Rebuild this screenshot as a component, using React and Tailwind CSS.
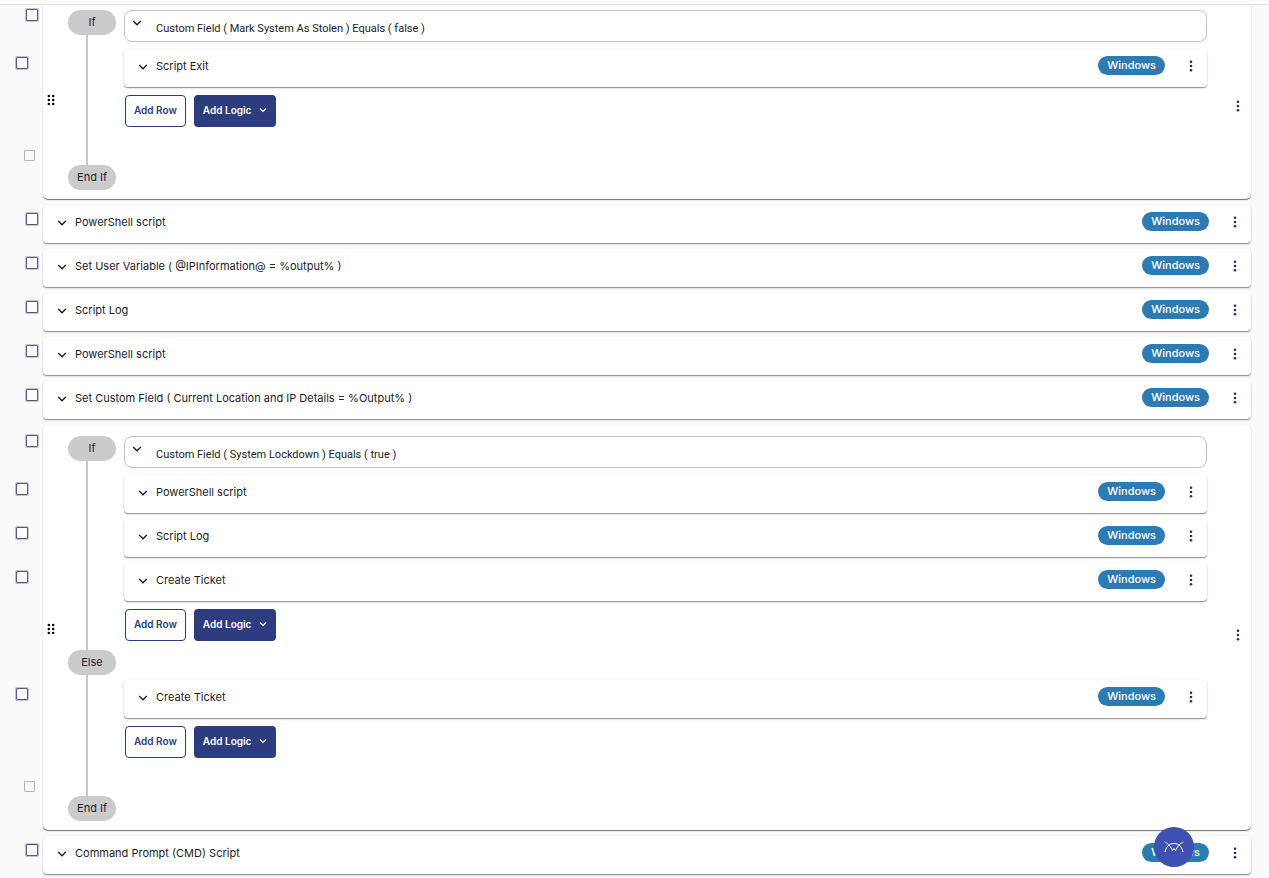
const steps = [
  {
    id: "s1",
    type: "if",
    condition: "Custom Field ( Mark System As Stolen ) Equals ( false )",
    then: ["Script Exit"]
  },
  { id: "s2", type: "row", title: "PowerShell script" },
  { id: "s3", type: "row", title: "Set User Variable ( @IPInformation@ = %output% )" },
  { id: "s4", type: "row", title: "Script Log" },
  { id: "s5", type: "row", title: "PowerShell script" },
  {
    id: "s6",
    type: "row",
    title: "Set Custom Field ( Current Location and IP Details = %Output% )"
  },
  {
    id: "s7",
    type: "if",
    condition: "Custom Field ( System Lockdown ) Equals ( true )",
    then: ["PowerShell script", "Script Log", "Create Ticket"],
    otherwise: ["Create Ticket"]
  },
  { id: "s8", type: "row", title: "Command Prompt (CMD) Script" }
];

const Chevron = ({ className }) => (
  <svg viewBox="0 0 10 10" className={className} fill="none" stroke="currentColor">
    <path d="M1.2 3.1 5 6.7l3.8-3.6" strokeWidth="1.4" />
  </svg>
);

const MenuButton = () => (
  <button type="button" aria-label="More options" className="text-[#2b2a6c]">
    <svg viewBox="0 0 12 12" className="size-3" fill="currentColor">
      <circle cx="6" cy="1.7" r="1.3" />
      <circle cx="6" cy="6" r="1.3" />
      <circle cx="6" cy="10.3" r="1.3" />
    </svg>
  </button>
);

const DragHandle = () => (
  <svg viewBox="0 0 8 12" className="h-3 w-2 text-black" fill="currentColor">
    <circle cx="1.8" cy="1.9" r="1.25" />
    <circle cx="6.2" cy="1.9" r="1.25" />
    <circle cx="1.8" cy="6" r="1.25" />
    <circle cx="6.2" cy="6" r="1.25" />
    <circle cx="1.8" cy="10.1" r="1.25" />
    <circle cx="6.2" cy="10.1" r="1.25" />
  </svg>
);

const Check = ({ label }) => (
  <input
    type="checkbox"
    aria-label={label}
    className="block size-3 appearance-none rounded-[1px] border border-[#5a588c] bg-white shadow-[0_0_0_1px_rgba(90,88,140,0.35)] checked:bg-[#5a588c]"
  />
);

const StepRow = ({ title }) => (
  <div className="flex h-[38px] items-center rounded bg-white pr-2.5 pb-1 pl-[14px] shadow-[0_1px_0_0_rgba(0,0,0,0.22),0_1px_2px_0_rgba(0,0,0,0.3)]">
    <button type="button" className="flex items-center gap-2 text-left">
      <Chevron className="mt-0.5 size-2.5" />
      <span>{title}</span>
    </button>
    <span className="mb-0.5 ml-auto rounded-full bg-[#2c7bb3] px-[9px] text-[11px] leading-[19px] font-medium text-white">
      Windows
    </span>
    <div className="ml-5 flex">
      <MenuButton />
    </div>
  </div>
);

const Actions = () => (
  <div className="mt-2 flex gap-2 pl-px text-[10px] font-semibold">
    <button
      type="button"
      className="h-8 rounded border border-[#2c3c7e] bg-white px-2 pb-0.5 text-[#2c3c7e]"
    >
      Add Row
    </button>
    <button
      type="button"
      className="flex h-8 items-center gap-2 rounded bg-[#2c3c7e] px-[9px] pb-0.5 text-white"
    >
      Add Logic
      <Chevron className="size-2" />
    </button>
  </div>
);

const Pill = ({ children }) => (
  <div className="flex h-[25px] w-12 items-center justify-center rounded-full bg-[#cbcbcb]">
    {children}
  </div>
);

// Pill with the connector line running down to the next pill
const Rail = ({ label }) => (
  <div className="mr-2 flex flex-col">
    <Pill>{label}</Pill>
    <div className="ml-[18px] w-0.5 flex-1 bg-[#c6c6c6]" />
  </div>
);

const Rows = ({ items }) => (
  <div className="space-y-1.5">
    {items.map((title, i) => (
      <StepRow key={i} title={title} />
    ))}
  </div>
);

const RowChecks = ({ items }) => (
  <div className="space-y-1.5">
    {items.map((title, i) => (
      <div key={i} className="h-[38px] pt-2 pl-4">
        <Check label={`Select ${title}`} />
      </div>
    ))}
  </div>
);

const IfBlock = ({ step }) => (
  <div className="flex">
    <div className="flex w-[43px] shrink-0 flex-col">
      <div className="h-[50px] pt-2.5 pl-[26px]">
        <Check label="Select condition" />
      </div>
      <RowChecks items={step.then} />
      {step.otherwise && (
        <div className="pt-[79px]">
          <RowChecks items={step.otherwise} />
        </div>
      )}
      <input
        type="checkbox"
        disabled
        aria-label="End of condition"
        className="mt-auto mb-[38px] ml-6 block size-[11px] appearance-none rounded-[1px] border border-[#b5b5b5]"
      />
    </div>

    <div className="flex flex-1 rounded-[5px] bg-white pt-[11px] pr-[7px] pb-[9px] shadow-[0_1px_1px_-1px_rgba(0,0,0,0.8),0_1px_1px_0_rgba(0,0,0,0.5)]">
      <div className="flex w-[25px] items-center pl-1">
        <DragHandle />
      </div>

      <div className="flex-1">
        <div className="flex">
          <Rail label="If" />
          <div className={step.otherwise ? "flex-1 pb-[9px]" : "flex-1 pb-[38px]"}>
            <button
              type="button"
              className="mb-[7px] flex h-8 w-full items-start gap-[14px] rounded-lg border border-[#c4c4c4] pl-[7px] text-left"
            >
              <Chevron className="mt-[7px] size-2.5" />
              <span className="mt-2.5 font-[Roboto] leading-4">{step.condition}</span>
            </button>
            <Rows items={step.then} />
            <Actions />
          </div>
        </div>

        {step.otherwise && (
          <div className="flex">
            <Rail label="Else" />
            <div className="flex-1 pt-[30px] pb-[38px]">
              <Rows items={step.otherwise} />
              <Actions />
            </div>
          </div>
        )}

        <Pill>End If</Pill>
      </div>

      <div className="ml-[25px] flex items-center pt-3">
        <MenuButton />
      </div>
    </div>
  </div>
);

const App = () => (
  <div className="min-h-screen bg-[#fafafa] font-['Inter',sans-serif] text-[11px] text-[#1c1c2b]">
    <div className="relative z-10 h-[5px] border-b border-[#e6e6e6] bg-[#fafafa]" />

    <main className="-mt-1.5 space-y-1.5 pr-[18px] pb-1">
      {steps.map((step) =>
        step.type === "if" ? (
          <IfBlock key={step.id} step={step} />
        ) : (
          <div key={step.id} className="flex">
            <div className="w-[43px] shrink-0 pt-2 pl-[26px]">
              <Check label={`Select ${step.title}`} />
            </div>
            <div className="flex-1">
              <StepRow title={step.title} />
            </div>
          </div>
        )
      )}
    </main>

    <button
      type="button"
      aria-label="Assistant"
      className="fixed right-[75px] bottom-[11px] z-20 flex size-10 items-center justify-center rounded-full bg-[#3f51b0] text-white"
    >
      <svg viewBox="0 0 20 12" className="h-3 w-5" fill="none" stroke="currentColor">
        <path d="M.5 1C3.500 2 6 4.500 8 8.500L8.500 9.500 10 7.500l1.500 2 .5-1C14 4.500 16.500 2 19.500 1" />
        <path d="M1 11C2 7 4 2.500 10 2.500S18 7 19 11" />
      </svg>
    </button>
  </div>
);

export default App;
